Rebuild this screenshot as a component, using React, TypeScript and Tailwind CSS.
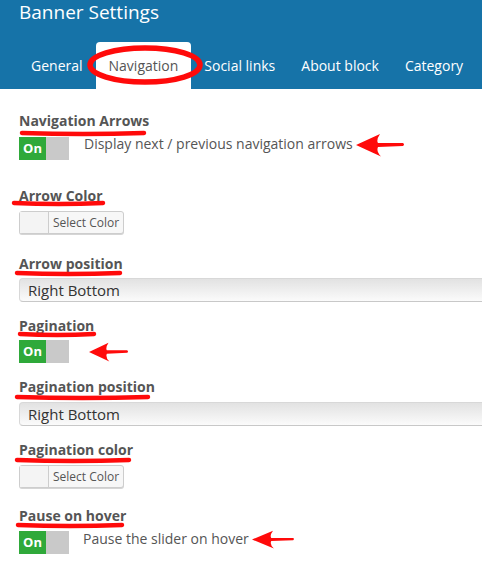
import React from 'react';

function Toggle() {
  return (
    <div className="flex h-[23px] w-[50px] shrink-0">
      <div className="flex w-[27px] items-center justify-center bg-[#2fa93a] text-[13px] font-bold text-white">On</div>
      <div className="flex-1 bg-[#c9c9c9]" />
    </div>
  );
}

function ColorButton() {
  return (
    <div className="mt-[5px] flex h-[23px] w-[105px] rounded-[3px] border border-[#cdcdcd] bg-[#f7f7f7] shadow-[0_1px_0_#d5d5d5]">
      <div className="w-[29px] border-r border-[#cdcdcd] bg-[#f4f4f4]" />
      <div className="flex flex-1 items-center justify-center text-[12px] text-[#555]">Select Color</div>
    </div>
  );
}

function SelectBox({ value, className }: { value: string; className: string }) {
  return (
    <div
      className={`mr-[-20px] flex h-[24px] items-center rounded-l-[4px] border border-[#d8d8d8] border-b-[#c8c8c8] bg-linear-to-b from-[#e2e2e2] to-[#fbfbfb] pl-[8px] text-[15px] text-[#333] ${className}`}
    >
      {value}
    </div>
  );
}

function RedArrow({ className }: { className: string }) {
  return (
    <svg viewBox="0 0 48 24" preserveAspectRatio="none" className={`shrink-0 ${className}`}>
      <path d="M0 12 L24 1 Q20 7 22 10 L47 10 Q49 11.5 47 13 L22 14 Q20 18 25 23.5 Z" fill="#ff0a0a" />
    </svg>
  );
}

function Underline({ className, w }: { className: string; w: number }) {
  return (
    <svg className={`pointer-events-none absolute h-[8px] ${className}`} viewBox={`0 0 ${w} 8`}>
      <path d={`M3 4 Q${w / 2} 6 ${w - 3} 4`} stroke="#ff0a0a" strokeWidth="4.5" strokeLinecap="round" fill="none" />
    </svg>
  );
}

function Label({ text, className, children }: { text: string; className: string; children: React.ReactNode }) {
  return (
    <div className={`relative h-[20px] text-[14px] font-bold leading-[20px] text-[#555] ${className}`}>
      {text}
      {children}
    </div>
  );
}

export default function App() {
  const tabs = ['General', 'Navigation', 'Social links', 'About block', 'Category'];

  return (
    <div className="relative h-[564px] w-[482px] overflow-hidden bg-white font-['Open_Sans',sans-serif]">
      <header className="relative h-[89px] bg-[#1673a8]">
        <h1 className="pl-[19px] text-[19px] font-normal leading-[24px] text-white">Banner Settings</h1>
        <nav className="mt-[18px] flex h-[47px] pl-[18px]">
          {tabs.map((t) => (
            <div
              key={t}
              className={`whitespace-nowrap px-[13px] pt-[14px] text-[14px] leading-[20px] ${
                t === 'Navigation' ? 'rounded-t-[4px] bg-white text-[#555]' : 'text-white'
              }`}
            >
              {t}
            </div>
          ))}
        </nav>
        <svg className="pointer-events-none absolute left-[86px] top-[44px] h-[42px] w-[118px]" viewBox="0 0 118 42">
          <ellipse cx="59" cy="21" rx="55" ry="17" stroke="#ff0a0a" strokeWidth="5.5" fill="none" />
        </svg>
      </header>

      <main className="pl-[19px] pt-[22px]">
        <Label text="Navigation Arrows" className="">
          <Underline w={128} className="left-[0px] top-[18px] w-[128px]" />
        </Label>
        <div className="mt-[6px] flex items-start">
          <Toggle />
          <span className="ml-[15px] mt-[-3px] whitespace-nowrap text-[14px] leading-[20px] text-[#555]">
            Display next / previous navigation arrows
          </span>
          <RedArrow className="ml-[3px] mt-[-4px] h-[24px] w-[48px]" />
        </div>

        <Label text="Arrow Color" className="mt-[26px]">
          <Underline w={95} className="left-[-8px] top-[13px] w-[95px]" />
        </Label>
        <ColorButton />

        <Label text="Arrow position" className="mt-[20px]">
          <Underline w={109} className="left-[-5px] top-[15px] w-[109px]" />
        </Label>
        <SelectBox value="Right Bottom" className="mt-[4px]" />

        <Label text="Pagination" className="mt-[14px]">
          <Underline w={80} className="left-[-2px] top-[14px] w-[80px]" />
        </Label>
        <div className="mt-[4px] flex items-start">
          <Toggle />
          <RedArrow className="ml-[20px] mt-[2px] h-[20px] w-[39px]" />
        </div>

        <Label text="Pagination position" className="mt-[14px]">
          <Underline w={137} className="left-[-5px] top-[16px] w-[137px]" />
        </Label>
        <SelectBox value="Right Bottom" className="mt-[5px]" />

        <Label text="Pagination color" className="mt-[14px]">
          <Underline w={118} className="left-[-5px] top-[16px] w-[118px]" />
        </Label>
        <div className="mt-[1px]">
          <ColorButton />
        </div>

        <Label text="Pause on hover" className="mt-[18px]">
          <Underline w={110} className="left-[-4px] top-[15px] w-[110px]" />
        </Label>
        <div className="mt-[5px] flex items-start">
          <Toggle />
          <span className="ml-[14px] mt-[-2px] whitespace-nowrap text-[14px] leading-[20px] text-[#555]">
            Pause the slider on hover
          </span>
          <RedArrow className="ml-[3px] mt-[-1px] h-[19px] w-[42px]" />
        </div>
      </main>
    </div>
  );
}
